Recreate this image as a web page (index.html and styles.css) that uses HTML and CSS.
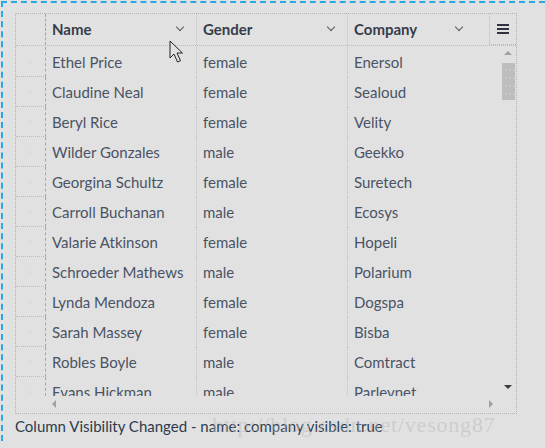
FILE: index.html
```html
<!DOCTYPE html>
<html>
<head>
<meta charset="utf-8">
<link rel="stylesheet" href="styles.css">
</head>
<body>
<div class="page">
  <div class="grid">
    <div class="header">
      <div class="rh"></div>
      <div class="hc"><span>Name</span><i class="chev"></i></div>
      <div class="hc"><span>Gender</span><i class="chev"></i></div>
      <div class="hc last"><span>Company</span><i class="chev"></i></div>
      <div class="menu"><svg width="12" height="10" viewBox="0 0 12 10"><rect x="0" y="0" width="12" height="2" fill="#2f3440"/><rect x="0" y="4" width="12" height="2" fill="#2f3440"/><rect x="0" y="8" width="12" height="2" fill="#2f3440"/></svg></div>
    </div>
    <div class="bodywrap">
      <div class="viewport">
        <div class="rows">
          <div class="row"><div class="rh"><span class="ck">✓</span></div><div class="c">Ethel Price</div><div class="c">female</div><div class="c last">Enersol</div></div>
          <div class="row"><div class="rh"><span class="ck">✓</span></div><div class="c">Claudine Neal</div><div class="c">female</div><div class="c last">Sealoud</div></div>
          <div class="row"><div class="rh"><span class="ck">✓</span></div><div class="c">Beryl Rice</div><div class="c">female</div><div class="c last">Velity</div></div>
          <div class="row"><div class="rh"><span class="ck">✓</span></div><div class="c">Wilder Gonzales</div><div class="c">male</div><div class="c last">Geekko</div></div>
          <div class="row"><div class="rh"><span class="ck">✓</span></div><div class="c">Georgina Schultz</div><div class="c">female</div><div class="c last">Suretech</div></div>
          <div class="row"><div class="rh"><span class="ck">✓</span></div><div class="c">Carroll Buchanan</div><div class="c">male</div><div class="c last">Ecosys</div></div>
          <div class="row"><div class="rh"><span class="ck">✓</span></div><div class="c">Valarie Atkinson</div><div class="c">female</div><div class="c last">Hopeli</div></div>
          <div class="row"><div class="rh"><span class="ck">✓</span></div><div class="c">Schroeder Mathews</div><div class="c">male</div><div class="c last">Polarium</div></div>
          <div class="row"><div class="rh"><span class="ck">✓</span></div><div class="c">Lynda Mendoza</div><div class="c">female</div><div class="c last">Dogspa</div></div>
          <div class="row"><div class="rh"><span class="ck">✓</span></div><div class="c">Sarah Massey</div><div class="c">female</div><div class="c last">Bisba</div></div>
          <div class="row"><div class="rh"><span class="ck">✓</span></div><div class="c">Robles Boyle</div><div class="c">male</div><div class="c last">Comtract</div></div>
          <div class="row"><div class="rh"><span class="ck">✓</span></div><div class="c">Evans Hickman</div><div class="c">male</div><div class="c last">Parlevnet</div></div>
        </div>
        <div class="vscroll">
          <i class="up"></i>
          <div class="thumb"></div>
          <i class="down"></i>
        </div>
      </div>
      <div class="hscroll">
        <i class="left"></i>
        <i class="right"></i>
      </div>
    </div>
  </div>
  <div class="status">Column Visibility Changed - name: company visible: true</div>
</div>
<div class="watermark">http://blog.csdn.net/vesong87</div>
<svg class="cursor" width="18" height="26" viewBox="0 0 18 26"><path d="M1 1 L1 18 L5 14 L8.5 22 L11.5 20.7 L8 13 L13.5 13 Z" fill="#e1e1e1" stroke="#222" stroke-width="1"/></svg>
</body>
</html>
```

FILE: styles.css
```css
html, body {
  margin: 0;
  padding: 0;
  background: #e1e1e1;
  width: 545px;
  height: 448px;
  overflow: hidden;
  font-family: Lato, "Liberation Sans", sans-serif;
}
.page {
  margin: 1px 0 0 1px;
  border-top: 2px dashed #2aa7e6;
  border-left: 2px dashed #2aa7e6;
  padding: 10px 0 0 12px;
  height: 440px;
  box-sizing: border-box;
}
.grid {
  width: 502px;
  height: 401px;
  border: 1px dotted #b4b4b4;
  box-sizing: border-box;
  display: flex;
  flex-direction: column;
  position: relative;
}
.header {
  display: flex;
  height: 32px;
  border-bottom: 1px dotted #bdbdbd;
  box-sizing: border-box;
  flex: none;
}
.rh {
  width: 30px;
  flex: none;
  border-right: 1px dashed #a4a4a4;
  box-sizing: border-box;
  display: flex;
  align-items: center;
  justify-content: center;
}
.hc {
  width: 151px;
  flex: none;
  box-sizing: border-box;
  border-right: 1px dotted #c4c4c4;
  display: flex;
  align-items: center;
  justify-content: space-between;
  padding: 0 13px 2px 6px;
  font-weight: bold;
  font-size: 15px;
  color: #363d4a;
}
.hc.last {
  width: 127px;
  border-right: none;
}
.chev {
  width: 5px;
  height: 5px;
  border-right: 1px solid #555c68;
  border-bottom: 1px solid #555c68;
  transform: rotate(45deg);
  margin-top: -4px;
}
.menu {
  margin-left: auto;
  width: 27px;
  height: 31px;
  box-sizing: border-box;
  border: 1px dotted #b8b8b8;
  border-top: none;
  border-right: none;
  display: flex;
  align-items: center;
  justify-content: center;
}
.bodywrap {
  flex: 1;
  display: flex;
  flex-direction: column;
  min-height: 0;
}
.viewport {
  flex: 1;
  display: flex;
  min-height: 0;
  overflow: hidden;
}
.rows {
  flex: 1;
  overflow: hidden;
  padding-top: 1px;
}
.row {
  display: flex;
  height: 30px;
}
.row .rh {
  border-bottom: 1px dotted #bdbdbd;
}
.ck {
  font-size: 9px;
  color: #cfded6;
}
.c {
  width: 151px;
  flex: none;
  box-sizing: border-box;
  border-right: 1px dotted #c4c4c4;
  padding-left: 6px;
  display: flex;
  align-items: center;
  font-size: 15px;
  color: #4a5365;
  white-space: nowrap;
}
.c.last {
  border-right: none;
  width: 140px;
}
.vscroll {
  width: 15px;
  flex: none;
  position: relative;
}
.up {
  position: absolute;
  left: 3px;
  top: 5px;
  width: 0;
  height: 0;
  border-left: 4px solid transparent;
  border-right: 4px solid transparent;
  border-bottom: 4px solid #a0a0a0;
}
.thumb {
  position: absolute;
  left: 1px;
  top: 17px;
  width: 13px;
  height: 37px;
  background-color: #bdbdbd;
  background-image: radial-gradient(circle, #d2d2d2 0.5px, transparent 0.9px);
  background-size: 4px 8px;
  background-position: 2px 3px;
}
.down {
  position: absolute;
  left: 3px;
  top: 339px;
  width: 0;
  height: 0;
  border-left: 4px solid transparent;
  border-right: 4px solid transparent;
  border-top: 4px solid #3a3a3a;
}
.hscroll {
  height: 17px;
  flex: none;
  position: relative;
}
.left {
  position: absolute;
  left: 36px;
  top: 4px;
  border-top: 4px solid transparent;
  border-bottom: 4px solid transparent;
  border-right: 4px solid #a0a0a0;
}
.right {
  position: absolute;
  left: 473px;
  top: 4px;
  border-top: 4px solid transparent;
  border-bottom: 4px solid transparent;
  border-left: 4px solid #a0a0a0;
}
.status {
  margin-top: 3px;
  font-size: 15px;
  color: #2e3a4e;
}
.watermark {
  position: absolute;
  left: 212px;
  top: 412px;
  font-family: "Liberation Serif", serif;
  font-size: 22px;
  letter-spacing: 0.8px;
  color: rgba(185, 185, 185, 0.5);
  white-space: nowrap;
}
.cursor {
  position: absolute;
  left: 169px;
  top: 40px;
}
```
